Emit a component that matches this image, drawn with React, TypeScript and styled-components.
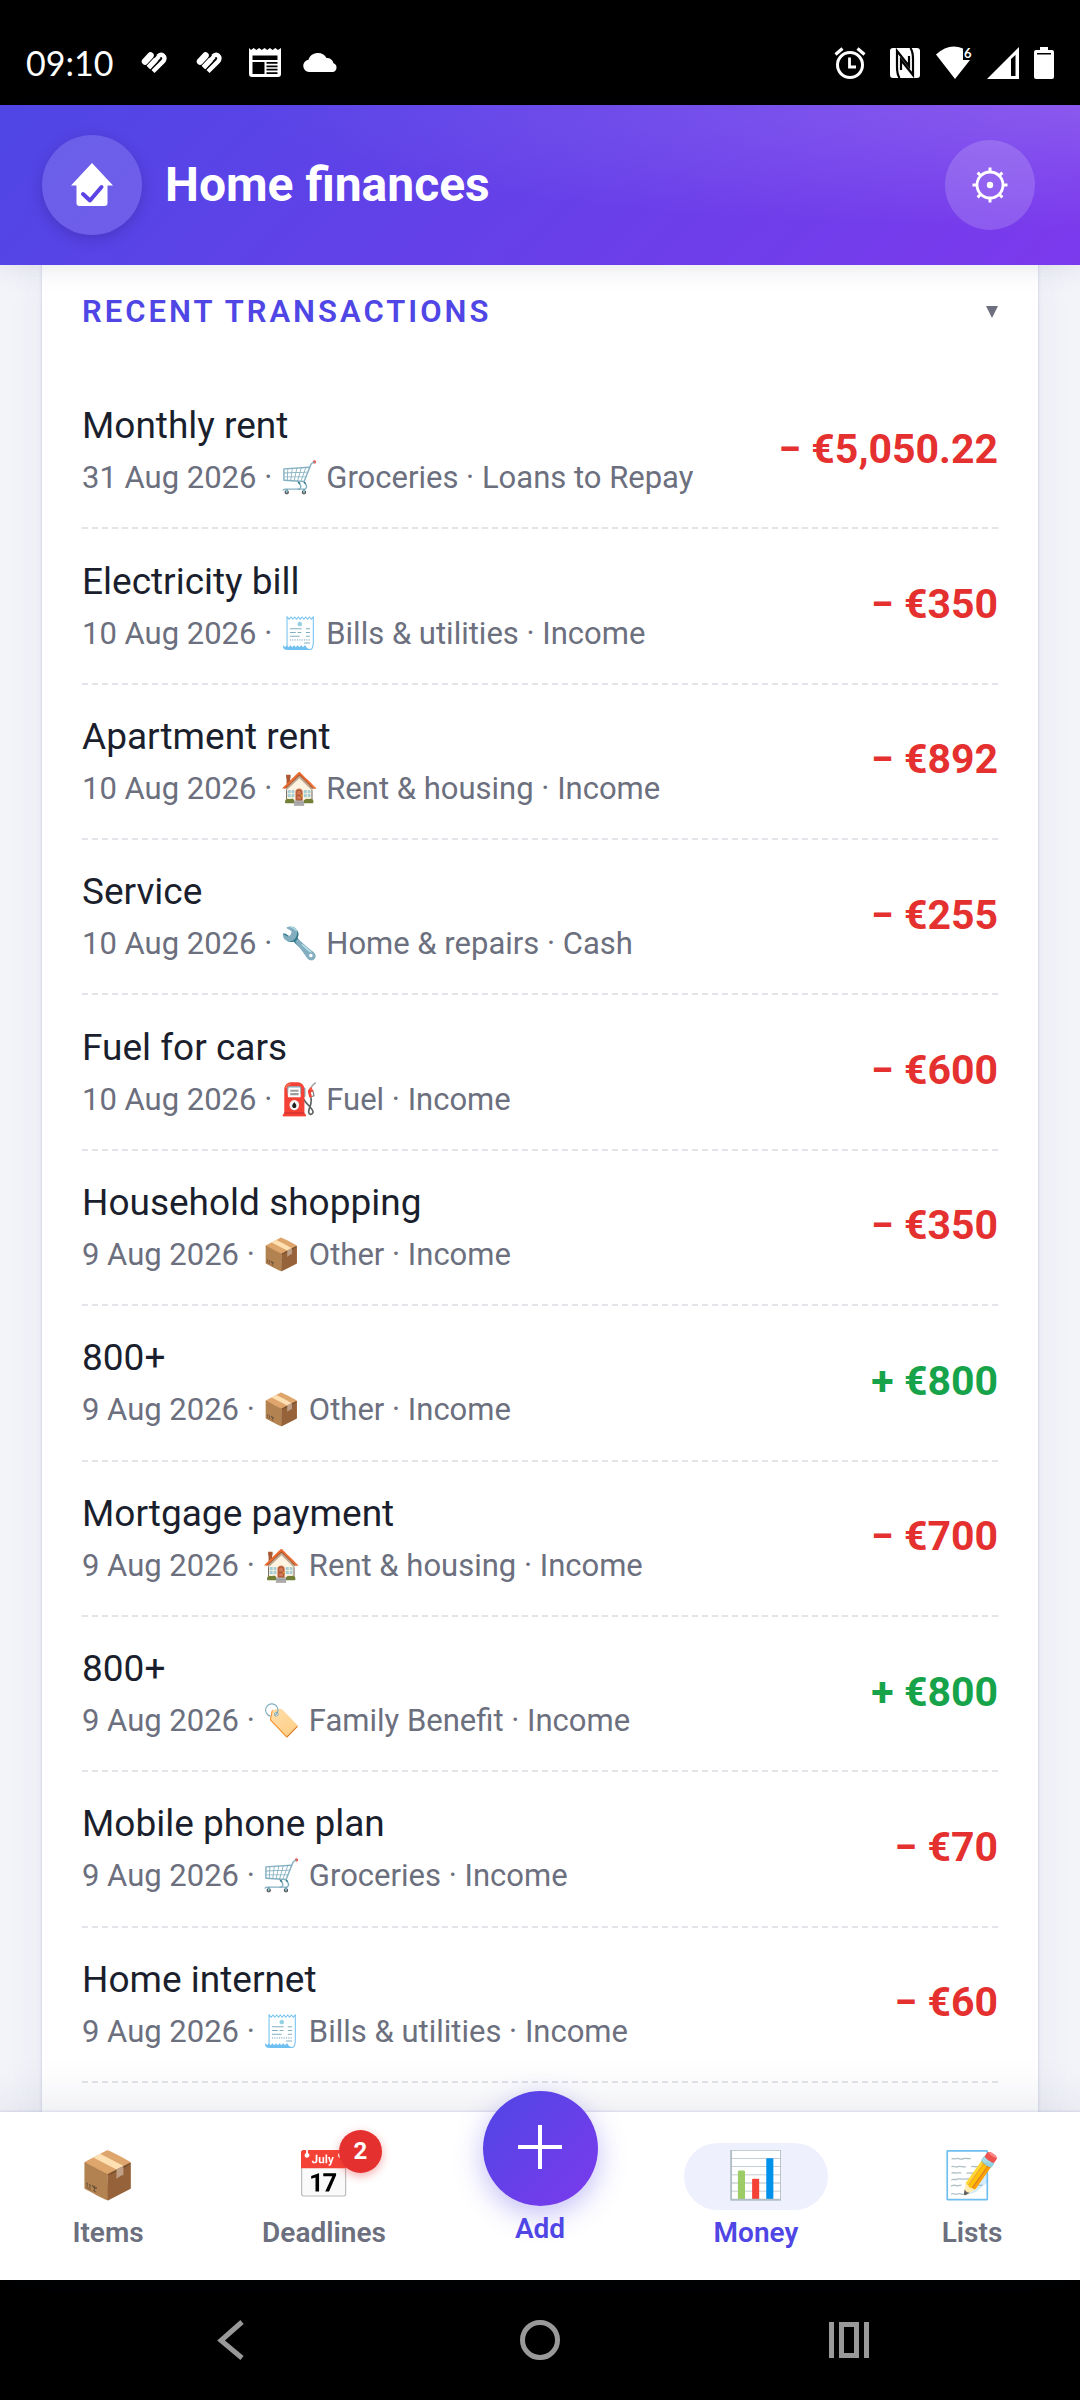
import React from 'react';
import styled, { createGlobalStyle, css } from 'styled-components';

type Transaction = {
  id: number;
  title: string;
  date: string;
  icon: string;
  category: string;
  source: string;
  amount: string;
  income?: boolean;
};

const transactions: Transaction[] = [
  { id: 1, title: 'Monthly rent', date: '31 Aug 2026', icon: '🛒', category: 'Groceries', source: 'Loans to Repay', amount: '€5,050.22' },
  { id: 2, title: 'Electricity bill', date: '10 Aug 2026', icon: '🧾', category: 'Bills & utilities', source: 'Income', amount: '€350' },
  { id: 3, title: 'Apartment rent', date: '10 Aug 2026', icon: '🏠', category: 'Rent & housing', source: 'Income', amount: '€892' },
  { id: 4, title: 'Service', date: '10 Aug 2026', icon: '🔧', category: 'Home & repairs', source: 'Cash', amount: '€255' },
  { id: 5, title: 'Fuel for cars', date: '10 Aug 2026', icon: '⛽', category: 'Fuel', source: 'Income', amount: '€600' },
  { id: 6, title: 'Household shopping', date: '9 Aug 2026', icon: '📦', category: 'Other', source: 'Income', amount: '€350' },
  { id: 7, title: '800+', date: '9 Aug 2026', icon: '📦', category: 'Other', source: 'Income', amount: '€800', income: true },
  { id: 8, title: 'Mortgage payment', date: '9 Aug 2026', icon: '🏠', category: 'Rent & housing', source: 'Income', amount: '€700' },
  { id: 9, title: '800+', date: '9 Aug 2026', icon: '🏷️', category: 'Family Benefit', source: 'Income', amount: '€800', income: true },
  { id: 10, title: 'Mobile phone plan', date: '9 Aug 2026', icon: '🛒', category: 'Groceries', source: 'Income', amount: '€70' },
  { id: 11, title: 'Home internet', date: '9 Aug 2026', icon: '🧾', category: 'Bills & utilities', source: 'Income', amount: '€60' },
];

const HeartIcon = () => (
  <svg width="36" height="32" viewBox="0 0 36 32" fill="none" stroke="#fff" aria-hidden="true">
    <path d="M8 14.5 13.5 8.5" strokeWidth="6.5" strokeLinecap="round" />
    <path d="M11.5 20.5 22 9.5" strokeWidth="4.2" />
    <path d="M16 24.5 26 14.5Q29 11 26 8.5 23.5 6.5 21 9.5" strokeWidth="4.4" />
    <path d="M11.5 20.5 19 12.5" strokeWidth="5" />
  </svg>
);

const NewsIcon = () => (
  <svg width="36" height="32" viewBox="0 0 36 32" aria-hidden="true">
    <path
      fill="#fff"
      fillRule="evenodd"
      d="M2 1l2 2 2.7-2 2.7 2 2.7-2 2.7 2 2.7-2 2.7 2 2.7-2 2.7 2 2.7-2 2.7 2L34 1v26q0 3-3 3H5q-3 0-3-3zM5.500 8.500V13h25V8.500zM5.500 15v12h12V15zM19.500 15v1.800h11V15zM19.500 18.400v1.800h11v-1.800zM19.500 21.800v1.800h11v-1.800zM19.500 25.200V27h11v-1.800z"
    />
  </svg>
);

const CloudIcon = () => (
  <svg width="36" height="32" viewBox="0 0 36 32" aria-hidden="true">
    <path fill="#fff" d="M7 25a6.200 6.200 0 0 1-.6-12.300A10 10 0 0 1 24.500 11a6.600 6.600 0 0 1 7 5.200A4.600 4.600 0 0 1 31 25z" />
  </svg>
);

const AlarmIcon = () => (
  <svg width="32" height="34" viewBox="0 0 32 34" fill="none" stroke="#fff" aria-hidden="true">
    <circle cx="16" cy="19" r="12.500" strokeWidth="3" />
    <path d="M1.500 8.500 8.500 2.500M30.500 8.500 23.500 2.500" strokeWidth="3.200" />
    <path d="M15.500 11.500V21H22" strokeWidth="2.800" />
  </svg>
);

const NfcIcon = () => (
  <svg width="30" height="32" viewBox="0 0 30 32" aria-hidden="true">
    <rect y="1" width="30" height="30" rx="3" fill="#fff" />
    <path
      d="M9.500 31Q7 27 7 20V4L19 19V9M20.500 1Q23 5 23 12V28L11 13V23"
      fill="none"
      stroke="#000"
      strokeWidth="2.200"
    />
  </svg>
);

const WifiIcon = () => (
  <svg width="36" height="34" viewBox="0 0 36 34" overflow="visible" aria-hidden="true">
    <path fill="#fff" d="M0 8.500Q13-3.500 27 2.500V14h7L19 33z" />
    <text x="28" y="12" fill="#fff" fontSize="13" fontWeight="700" fontFamily="Lato, sans-serif">
      6
    </text>
  </svg>
);

const SignalIcon = () => (
  <svg width="32" height="34" viewBox="0 0 32 34" aria-hidden="true">
    <path fill="#fff" fillRule="evenodd" d="M0 33 32 1v32zM24 13v17h4.500V9z" />
  </svg>
);

const BatteryIcon = () => (
  <svg width="20" height="34" viewBox="0 0 20 34" aria-hidden="true">
    <path fill="#fff" fillRule="evenodd" d="M6 1h8v3h4q2 0 2 2v25q0 2-2 2H2q-2 0-2-2V6q0-2 2-2h4zM3 7v1.500h14V7z" />
  </svg>
);

const HouseIcon = () => (
  <svg width="44" height="44" viewBox="0 0 44 44" aria-hidden="true">
    <path d="M22 0 43 22.500H37.500V40q0 3-3 3h-25q-3 0-3-3V22.500H1z" fill="#fff" />
    <path d="M13 31 20 37.500 31.500 24" fill="none" stroke="#5b43e6" strokeWidth="4" strokeLinecap="round" strokeLinejoin="round" />
  </svg>
);

const GearIcon = () => (
  <svg width="38" height="38" viewBox="0 0 38 38" fill="none" stroke="#fff" aria-hidden="true">
    <circle cx="19" cy="19" r="13" strokeWidth="2.800" />
    <circle cx="19" cy="19" r="3.200" fill="#fff" stroke="none" />
    {[0, 45, 90, 135, 180, 225, 270, 315].map((angle) => (
      <path key={angle} d="M19 1.500V6" strokeWidth="3" transform={`rotate(${angle} 19 19)`} />
    ))}
  </svg>
);

const PlusIcon = () => (
  <svg width="44" height="44" viewBox="0 0 44 44" stroke="#fff" strokeWidth="4" aria-hidden="true">
    <path d="M22 0V44M0 22H44" />
  </svg>
);

const App = () => {
  const [open, setOpen] = React.useState(true);

  return (
    <>
      <GlobalStyle />
      <Screen>
        <StatusBar>
          <StatusGroup $gap={19}>
            <Clock>09:10</Clock>
            <HeartIcon />
            <HeartIcon />
            <NewsIcon />
            <CloudIcon />
          </StatusGroup>
          <StatusGroup $gap={16}>
            <StatusGroup $gap={24}>
              <AlarmIcon />
              <NfcIcon />
            </StatusGroup>
            <StatusGroup $gap={15}>
              <WifiIcon />
              <SignalIcon />
              <BatteryIcon />
            </StatusGroup>
          </StatusGroup>
        </StatusBar>

        <Header>
          <Logo>
            <HouseIcon />
          </Logo>
          <h1>Home finances</h1>
          <SettingsButton type="button" aria-label="Settings">
            <GearIcon />
          </SettingsButton>
        </Header>

        <Main>
          <Card>
            <CardToggle type="button" aria-expanded={open} onClick={() => setOpen(!open)}>
              <span>RECENT TRANSACTIONS</span>
              <svg width="12" height="12" viewBox="0 0 12 12" aria-hidden="true">
                <path d="M0 0H12L6 12z" fill="#6c6f7e" />
              </svg>
            </CardToggle>
            {open && (
              <TransactionList>
                {transactions.map(({ id, title, date, icon, category, source, amount, income }) => (
                  <TransactionRow key={id}>
                    <TransactionInfo>
                      <TransactionTitle>{title}</TransactionTitle>
                      <TransactionMeta>
                        {date} · {icon} {category} · {source}
                      </TransactionMeta>
                    </TransactionInfo>
                    <Amount $income={income}>
                      {income ? '+' : '−'} {amount}
                    </Amount>
                  </TransactionRow>
                ))}
              </TransactionList>
            )}
          </Card>
        </Main>

        <TabBar>
          <Tab type="button">
            <TabIcon>📦</TabIcon>
            <span>Items</span>
          </Tab>
          <Tab type="button">
            <TabIcon>
              📅<Badge>2</Badge>
            </TabIcon>
            <span>Deadlines</span>
          </Tab>
          <Tab type="button" $active>
            <AddCircle>
              <PlusIcon />
            </AddCircle>
            <span>Add</span>
          </Tab>
          <Tab type="button" $active aria-current="page">
            <TabIcon $active>📊</TabIcon>
            <span>Money</span>
          </Tab>
          <Tab type="button">
            <TabIcon>📝</TabIcon>
            <span>Lists</span>
          </Tab>
        </TabBar>

        <SystemBar>
          <button type="button" aria-label="Back">
            <svg width="40" height="40" viewBox="0 0 40 40">
              <path d="M31 2 10 20.500 31 38" />
            </svg>
          </button>
          <button type="button" aria-label="Home">
            <svg width="40" height="40" viewBox="0 0 40 40">
              <circle cx="20" cy="20" r="17.500" />
            </svg>
          </button>
          <button type="button" aria-label="Recent apps">
            <svg width="40" height="40" viewBox="0 0 40 40">
              <path d="M2.500 2V38M37.500 2V38M12.500 4.500h15v31h-15z" />
            </svg>
          </button>
        </SystemBar>
      </Screen>
    </>
  );
};

export default App;

const GlobalStyle = createGlobalStyle`
  * {
    box-sizing: border-box;
  }
  body {
    margin: 0;
    font-family: Roboto, 'Noto Color Emoji', sans-serif;
    background-color: #f3f4f9;
  }
  h1, ul, p {
    margin: 0;
    padding: 0;
  }
  button {
    font-family: inherit;
    border: 0;
    padding: 0;
    background: none;
    cursor: pointer;
  }
  svg {
    display: block;
    flex-shrink: 0;
  }
`;

const Screen = styled.div`
  min-height: 100vh;
  display: flex;
  flex-direction: column;
`;

const StatusBar = styled.div`
  height: 105px;
  padding: 20px 26px 0;
  display: flex;
  align-items: center;
  justify-content: space-between;
  background-color: #000;
`;

const StatusGroup = styled.div<{ $gap: number }>`
  display: flex;
  align-items: center;
  gap: ${({ $gap }) => $gap}px;
`;

const Clock = styled.span`
  padding-right: 5px;
  color: #fff;
  font-family: Lato, sans-serif;
  font-size: 34px;
  line-height: 40px;
`;

const Header = styled.header`
  position: relative;
  z-index: 1;
  height: 160px;
  padding: 0 45px 0 42px;
  display: flex;
  align-items: center;
  gap: 23px;
  color: #fff;
  background:
    radial-gradient(ellipse at 100% 0, rgba(255, 255, 255, 0.15), transparent 55%),
    linear-gradient(135deg, #4f46e5, #7c3aed);
  box-shadow: 0 4px 24px rgba(30, 35, 90, 0.1);

  h1 {
    flex: 1;
    padding-bottom: 2px;
    font-size: 48px;
    font-weight: 700;
  }
`;

const Logo = styled.div`
  width: 100px;
  height: 100px;
  display: grid;
  place-items: center;
  border-radius: 50%;
  background-color: rgba(255, 255, 255, 0.14);
  box-shadow: 0 4px 14px rgba(30, 20, 90, 0.25);
`;

const SettingsButton = styled.button`
  width: 90px;
  height: 90px;
  display: grid;
  place-items: center;
  border-radius: 50%;
  background-color: rgba(255, 255, 255, 0.16);
`;

const Main = styled.main`
  flex: 1;
  display: flex;
  padding: 0 42px;
`;

const Card = styled.section`
  flex: 1;
  display: flex;
  flex-direction: column;
  padding: 29px 40px;
  background-color: #fff;
  box-shadow: 0 0 3px rgba(60, 65, 150, 0.22), 0 4px 36px rgba(60, 65, 150, 0.06);
`;

const CardToggle = styled.button`
  margin-bottom: 44px;
  display: flex;
  align-items: center;
  justify-content: space-between;
  color: #4f46e5;
  font-size: 31px;
  font-weight: 600;
  line-height: 36px;
  letter-spacing: 3px;
`;

const TransactionList = styled.ul`
  flex: 1;
  display: grid;
  grid-auto-rows: 1fr;
  list-style: none;
`;

const TransactionRow = styled.li`
  padding: 24px 0;
  display: flex;
  align-items: center;
  justify-content: space-between;
  gap: 24px;
  border-bottom: 2px dashed #e2e4ea;
`;

const TransactionInfo = styled.div`
  padding-top: 3px;
`;

const TransactionTitle = styled.p`
  margin-bottom: 8px;
  color: #1b1f2d;
  font-size: 37px;
  line-height: 44px;
`;

const TransactionMeta = styled.p`
  color: #6c6f7e;
  font-size: 31px;
  line-height: 44px;
`;

const Amount = styled.span<{ $income?: boolean }>`
  padding-bottom: 4px;
  color: ${({ $income }) => ($income ? '#16a34a' : '#e53030')};
  font-size: 41px;
  font-weight: 700;
  line-height: 48px;
  white-space: nowrap;
`;

const TabBar = styled.nav`
  position: relative;
  z-index: 1;
  height: 168px;
  display: grid;
  grid-template-columns: repeat(5, 1fr);
  background-color: #fff;
  box-shadow: 0 -1px 2px rgba(60, 65, 150, 0.14), 0 -8px 48px rgba(30, 35, 90, 0.1);
`;

const Tab = styled.button<{ $active?: boolean }>`
  padding-top: 31px;
  display: flex;
  flex-direction: column;
  align-items: center;
  gap: 6px;
  color: ${({ $active }) => ($active ? '#4f46e5' : '#6c6f7e')};
  font-size: 28px;
  font-weight: 600;
  line-height: 34px;
`;

const TabIcon = styled.div<{ $active?: boolean }>`
  position: relative;
  width: 144px;
  height: 67px;
  border-radius: 34px;
  font-size: 46px;
  line-height: 64px;
  ${({ $active }) =>
    $active &&
    css`
      background-color: #eef0fe;
    `}
`;

const Badge = styled.span`
  position: absolute;
  top: -13px;
  right: 14px;
  width: 43px;
  height: 43px;
  border-radius: 50%;
  color: #fff;
  background-color: #e53030;
  box-shadow: 0 3px 10px rgba(229, 48, 48, 0.4);
  font-size: 24px;
  font-weight: 700;
  line-height: 42px;
`;

const AddCircle = styled.div`
  width: 115px;
  height: 115px;
  margin-top: -52px;
  padding-bottom: 4px;
  display: grid;
  place-items: center;
  border-radius: 50%;
  background: linear-gradient(135deg, #4f46e5, #7c3aed);
  box-shadow: 0 8px 28px rgba(79, 70, 229, 0.35);
`;

const SystemBar = styled.div`
  height: 120px;
  padding: 0 76px;
  display: grid;
  grid-template-columns: repeat(3, 1fr);
  background-color: #000;

  button {
    display: grid;
    place-items: center;
  }
  svg {
    fill: none;
    stroke: #999;
    stroke-width: 5;
  }
`;
